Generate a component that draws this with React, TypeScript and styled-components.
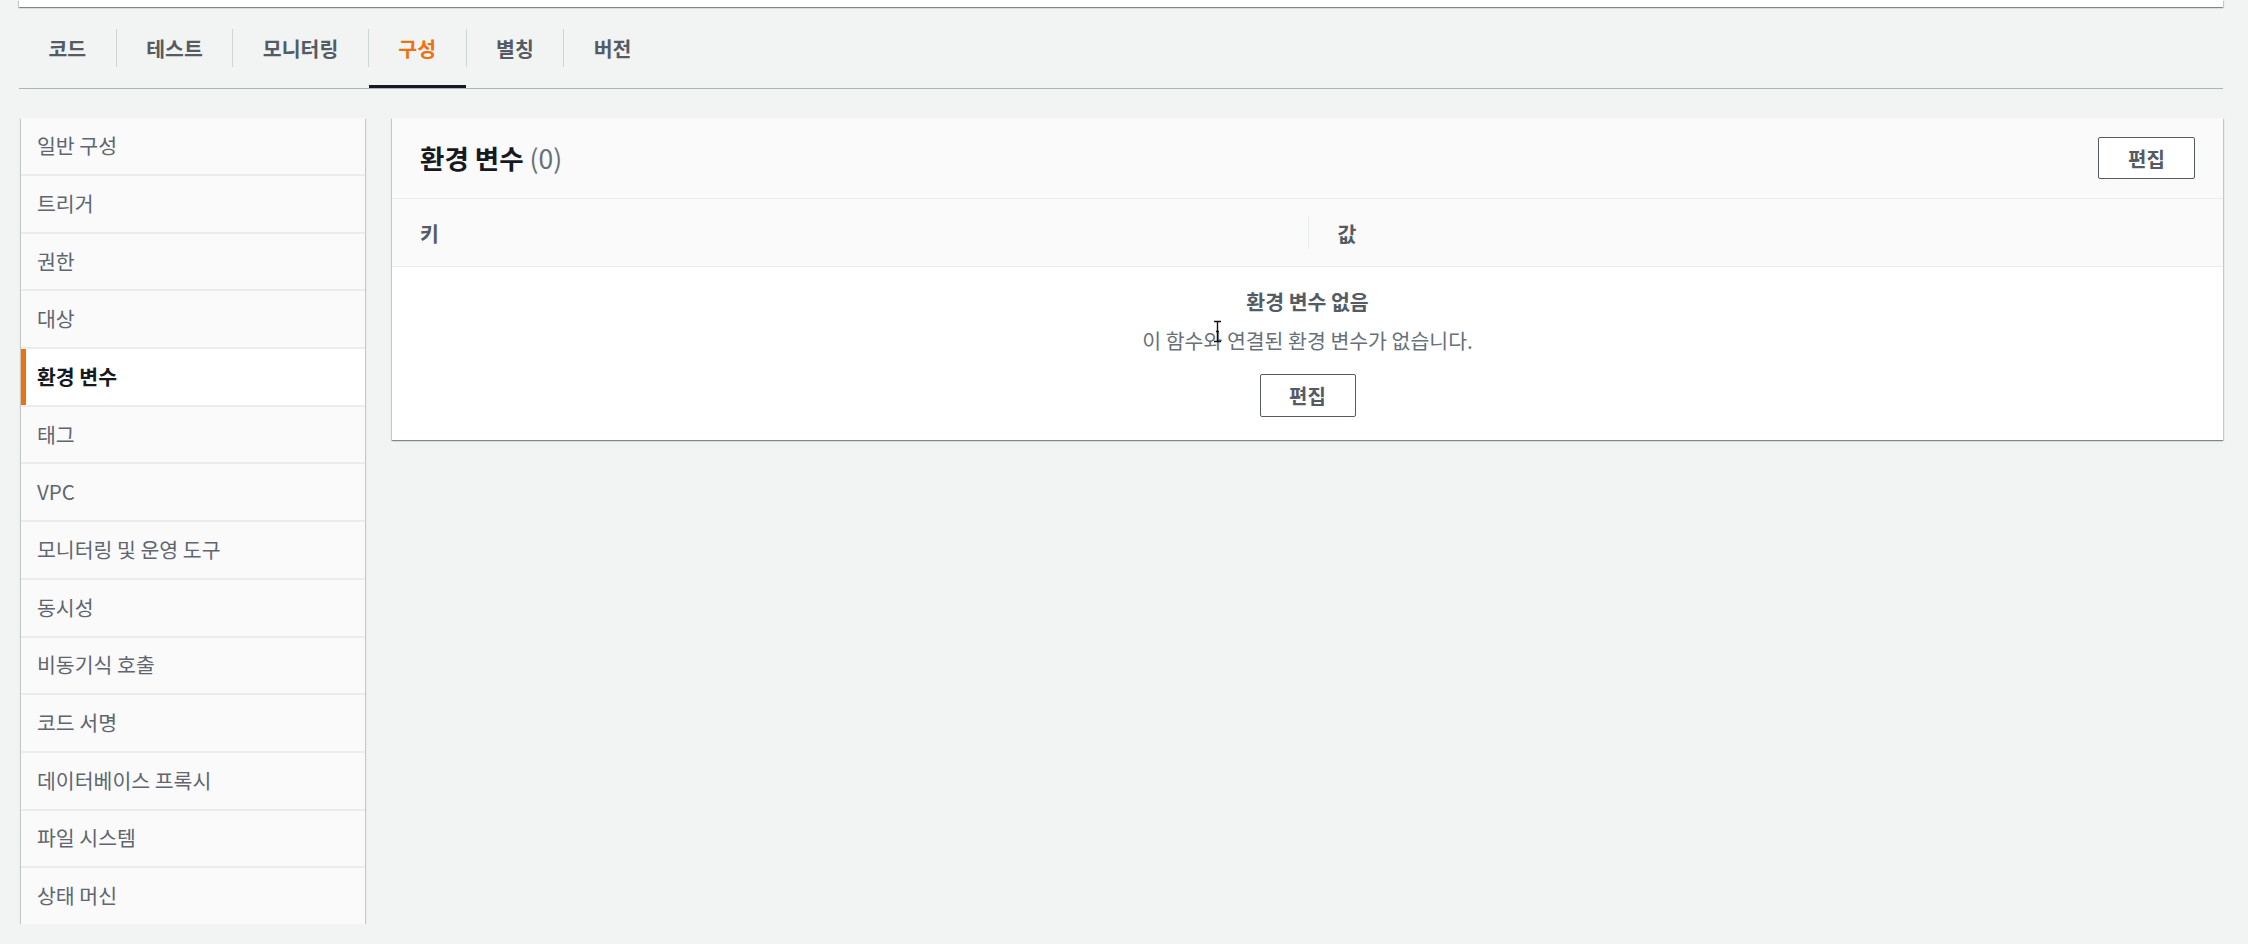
import React from "react";
import styled, { createGlobalStyle } from "styled-components";

const GlobalStyle = createGlobalStyle`
  html, body {
    margin: 0;
    padding: 0;
    background: #f2f3f3;
  }
  body {
    font-family: "Noto Sans CJK KR", "Noto Sans", sans-serif;
    color: #16191f;
  }
  * { box-sizing: border-box; }
`;

const shadow =
  "0 1px 1px 0 rgba(0,28,36,0.3), 1px 1px 1px 0 rgba(0,28,36,0.15), -1px 1px 1px 0 rgba(0,28,36,0.15)";

const Page = styled.div`
  padding: 0 25px 0 19px;
`;

const TopPanel = styled.div`
  height: 7px;
  background: #fff;
  box-shadow: ${shadow};
`;

const TabList = styled.div`
  display: flex;
  align-items: center;
  margin-top: 1px;
  border-bottom: 1px solid #aab7b8;
`;

const Tab = styled.button<{ $active?: boolean }>`
  display: flex;
  align-items: center;
  height: 80px;
  padding: 2px 29.5px 0;
  background: none;
  border: none;
  border-bottom: 3px solid ${(p) => (p.$active ? "#16191f" : "transparent")};
  font-family: inherit;
  font-size: 20.5px;
  font-weight: 700;
  color: ${(p) => (p.$active ? "#ec7211" : "#545b64")};
  cursor: pointer;
`;

const TabDivider = styled.span`
  width: 1px;
  height: 38px;
  background: #d0d5d5;
`;

const Content = styled.div`
  display: grid;
  grid-template-columns: 344px 1fr;
  gap: 27px;
  align-items: start;
  margin-top: 29px;
  padding-left: 2px;
`;

const Sidebar = styled.nav`
  display: flex;
  flex-direction: column;
  background: #fafafa;
  box-shadow: ${shadow};
`;

const SideItem = styled.div<{ $active?: boolean }>`
  display: flex;
  align-items: center;
  height: 56px;
  padding: 0 0 2px 16px;
  font-size: 20.5px;
  font-weight: ${(p) => (p.$active ? 700 : 400)};
  color: ${(p) => (p.$active ? "#16191f" : "#5f6670")};
  background: ${(p) => (p.$active ? "#fff" : "#fafafa")};
  box-shadow: ${(p) => (p.$active ? "inset 5px 0 0 #ec7211" : "none")};
  & + & {
    border-top: 2px solid #eaeded;
    height: 57.7px;
  }
`;

const Card = styled.section`
  background: #fff;
  box-shadow: ${shadow};
`;

const CardHeader = styled.div`
  display: flex;
  align-items: center;
  justify-content: space-between;
  height: 81px;
  padding: 0 28px;
  background: #fafafa;
  border-bottom: 1px solid #eaeded;
`;

const Title = styled.h2`
  margin: 0 0 2px;
  font-size: 26.5px;
  font-weight: 700;
  color: #16191f;
`;

const Count = styled.span`
  font-weight: 400;
  color: #687078;
`;

const Button = styled.button`
  width: 97px;
  height: 42px;
  border: 1px solid #545b64;
  border-radius: 2px;
  background: #fff;
  font-family: inherit;
  font-size: 20px;
  font-weight: 700;
  color: #545b64;
  cursor: pointer;
`;

const ColumnHeader = styled.div`
  display: grid;
  grid-template-columns: 1fr 1fr;
  height: 68px;
  background: #fafafa;
  border-bottom: 1px solid #eaeded;
`;

const HeaderCell = styled.div`
  display: flex;
  align-items: center;
  gap: 29px;
  padding-left: 28px;
  font-size: 20.5px;
  font-weight: 700;
  color: #545b64;
`;

const ColDivider = styled.span`
  width: 1px;
  height: 33px;
  margin-left: -28px;
  background: #eaeded;
`;

const Empty = styled.div`
  position: relative;
  display: flex;
  flex-direction: column;
  align-items: center;
  padding: 20px 0 23px;
`;

const EmptyTitle = styled.div`
  font-size: 20.5px;
  line-height: 28px;
  font-weight: 700;
  color: #545b64;
`;

const EmptyText = styled.div`
  margin-top: 11px;
  font-size: 20.5px;
  line-height: 28px;
  color: #687078;
`;

const EmptyButton = styled(Button)`
  margin-top: 20px;
  width: 96px;
  height: 43px;
`;

const Cursor = styled.svg`
  position: absolute;
  left: 821px;
  top: 53px;
  width: 9px;
  height: 23px;
`;

const tabs = ["코드", "테스트", "모니터링", "구성", "별칭", "버전"];
const sideItems = [
  "일반 구성",
  "트리거",
  "권한",
  "대상",
  "환경 변수",
  "태그",
  "VPC",
  "모니터링 및 운영 도구",
  "동시성",
  "비동기식 호출",
  "코드 서명",
  "데이터베이스 프록시",
  "파일 시스템",
  "상태 머신",
];

export default function App() {
  return (
    <>
      <GlobalStyle />
      <Page>
        <TopPanel />
        <TabList>
          {tabs.map((t, i) => (
            <React.Fragment key={t}>
              {i > 0 && <TabDivider />}
              <Tab $active={t === "구성"}>{t}</Tab>
            </React.Fragment>
          ))}
        </TabList>
        <Content>
          <Sidebar>
            {sideItems.map((s) => (
              <SideItem key={s} $active={s === "환경 변수"}>
                {s}
              </SideItem>
            ))}
          </Sidebar>
          <Card>
            <CardHeader>
              <Title>
                환경 변수 <Count>(0)</Count>
              </Title>
              <Button>편집</Button>
            </CardHeader>
            <ColumnHeader>
              <HeaderCell>키</HeaderCell>
              <HeaderCell>
                <ColDivider />값
              </HeaderCell>
            </ColumnHeader>
            <Empty>
              <EmptyTitle>환경 변수 없음</EmptyTitle>
              <EmptyText>이 함수와 연결된 환경 변수가 없습니다.</EmptyText>
              <EmptyButton>편집</EmptyButton>
              <Cursor viewBox="0 0 9 23">
                <path
                  d="M1 1.5 H8 M4.5 1.5 V21.5 M1 21.5 H8 M3 11.5 H6"
                  stroke="#111"
                  strokeWidth="1.4"
                  fill="none"
                />
              </Cursor>
            </Empty>
          </Card>
        </Content>
      </Page>
    </>
  );
}
